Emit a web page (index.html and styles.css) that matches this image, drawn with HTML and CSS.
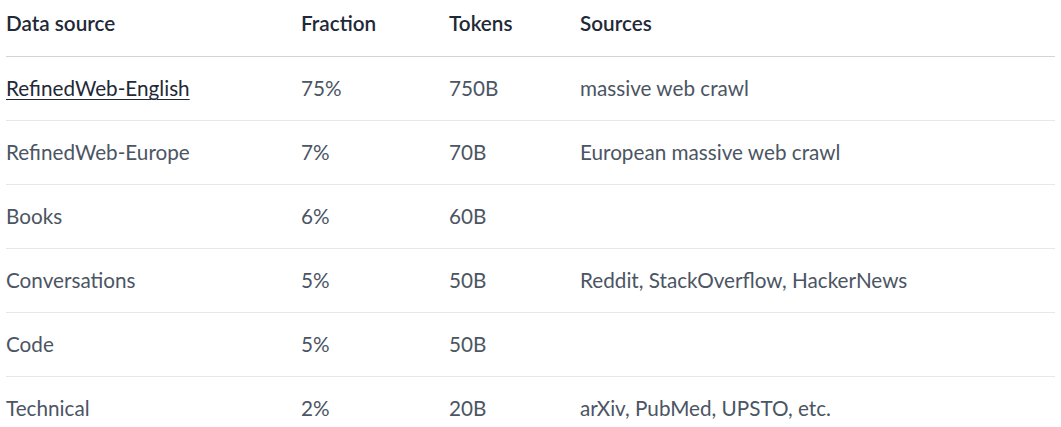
FILE: index.html
```html
<!DOCTYPE html>
<html>
<head>
<meta charset="utf-8">
<link rel="stylesheet" href="styles.css">
</head>
<body>
<table class="data-table">
  <thead>
    <tr>
      <th class="col-source">Data source</th>
      <th class="col-fraction">Fraction</th>
      <th class="col-tokens">Tokens</th>
      <th class="col-sources">Sources</th>
    </tr>
  </thead>
  <tbody>
    <tr><td><a class="link" href="#">RefinedWeb-English</a></td><td>75%</td><td>750B</td><td>massive web crawl</td></tr>
    <tr><td>RefinedWeb-Europe</td><td>7%</td><td>70B</td><td>European massive web crawl</td></tr>
    <tr><td>Books</td><td>6%</td><td>60B</td><td></td></tr>
    <tr><td>Conversations</td><td>5%</td><td>50B</td><td>Reddit, StackOverflow, HackerNews</td></tr>
    <tr><td>Code</td><td>5%</td><td>50B</td><td></td></tr>
    <tr><td>Technical</td><td>2%</td><td>20B</td><td>arXiv, PubMed, UPSTO, etc.</td></tr>
  </tbody>
</table>
</body>
</html>
```
FILE: styles.css
```css
html, body {
  margin: 0;
  padding: 0;
  background: #ffffff;
}
body {
  font-family: "Lato", "Noto Sans", sans-serif;
  font-size: 20.7px;
  color: #4b5563;
}
.data-table {
  margin-left: 6px;
  width: 1049px;
  border-collapse: collapse;
  table-layout: fixed;
}
.data-table th {
  text-align: left;
  font-weight: 600;
  color: #1f2937;
  line-height: 28px;
  padding: 9px 0 19px 0;
  border-bottom: 1px solid #d1d5db;
}
.data-table td {
  line-height: 28px;
  padding: 17px 0 18px 0;
  border-bottom: 1px solid #e5e7eb;
  white-space: nowrap;
}
.col-source { width: 295px; }
.col-fraction { width: 148px; }
.col-tokens { width: 131px; }
.link {
  color: #1f2937;
  text-decoration: underline;
  text-underline-offset: 3px;
  text-decoration-thickness: 1px;
}
```
